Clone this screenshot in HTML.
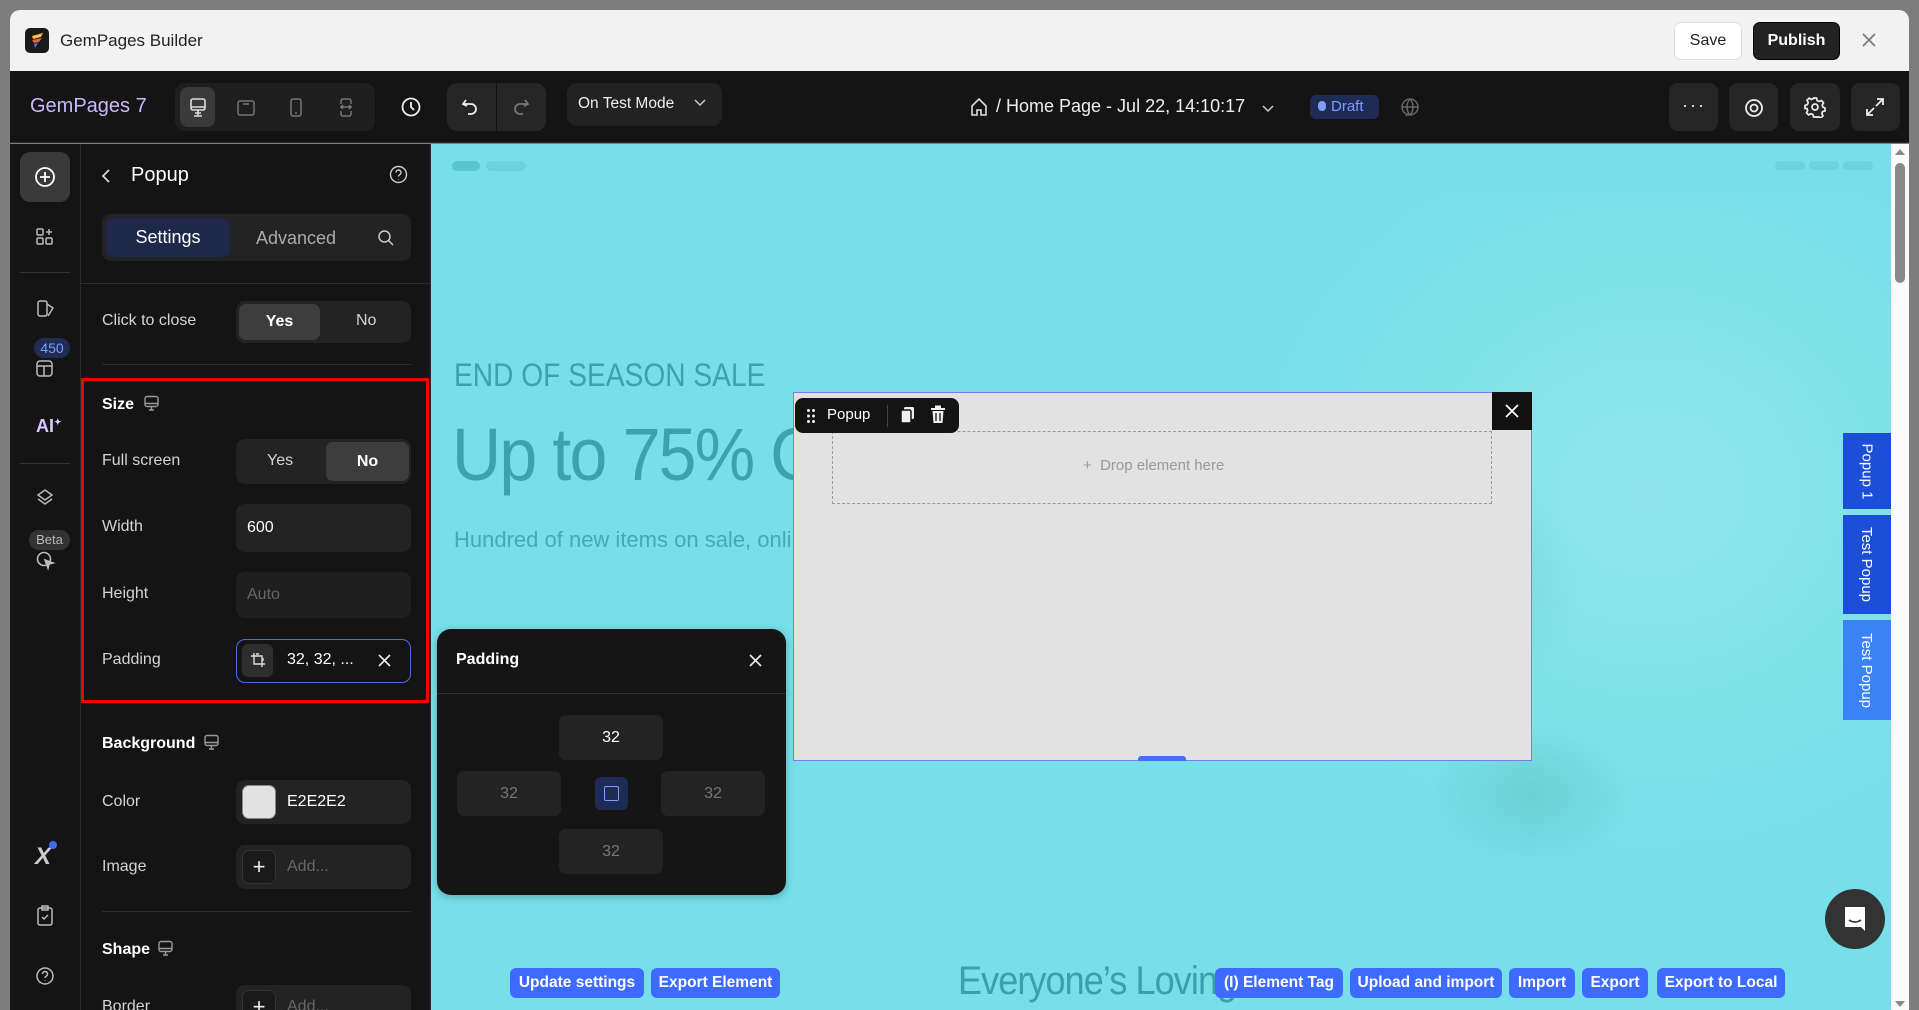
<!DOCTYPE html>
<html style="overflow:hidden;height:1010px"><head><meta charset="utf-8"><style>
*{box-sizing:border-box;margin:0;padding:0}
body{width:1919px;height:1010px;overflow:hidden;background:#7d7d7d;font-family:"Liberation Sans",sans-serif;position:relative}
.a{position:absolute}
.t{color:#d4d4d4;font-size:16px}
.ib{position:absolute;background:#262626;border-radius:8px}
svg{display:block}
.btn{position:absolute;background:#3d6bff;color:#fff;font-weight:bold;font-size:15.5px;border-radius:6px;height:30px;line-height:30px;text-align:center;top:968px}
.cell{position:absolute;background:#232323;border-radius:7px;color:#777;font-size:16px;text-align:center;line-height:45px;height:45px;width:104px}
.tab{position:absolute;left:1843px;width:48px;color:#fff;font-size:15px;display:flex;align-items:center;justify-content:center}
.tab span{transform:rotate(90deg);white-space:nowrap}
</style></head><body>
<div class="a" style="left:10px;top:10px;width:1899px;height:61px;background:#f2f2f2;border-radius:10px 10px 0 0"></div>
<div class="a" style="left:25px;top:28px;width:24px;height:25px;background:#1a1a1a;border-radius:5px"></div>
<svg class="a" style="left:28px;top:31px" width="18" height="19"><path d="M4 5 L15 2 L13 6 L5 8Z" fill="#f6c445"/><path d="M4 9 L14 7 L11 11 L6 12Z" fill="#ef5a3c"/><path d="M6 13 L10 12 L7 17Z" fill="#4b7bf5"/></svg>
<div class="a" style="left:60px;top:31px;font-size:17px;color:#222">GemPages Builder</div>
<div class="a" style="left:1674px;top:22px;width:68px;height:38px;background:#fff;border:1px solid #ddd;border-radius:7px;font-size:16px;line-height:36px;text-align:center;color:#222">Save</div>
<div class="a" style="left:1753px;top:22px;width:87px;height:38px;background:#222;border:1px solid #000;border-radius:7px;font-size:16px;font-weight:bold;line-height:36px;text-align:center;color:#fff">Publish</div>
<svg class="a" style="left:1862px;top:33px" width="14" height="14"><path d="M1 1L13 13M13 1L1 13" stroke="#777" stroke-width="1.6"/></svg>
<div class="a" style="left:10px;top:71px;width:1899px;height:72px;background:#141414;border-bottom:1px solid #2c2c2c"></div>
<div class="a" style="left:30px;top:95px;font-size:20px;color:#c9b8ff">GemPages 7</div>
<div class="ib" style="left:175px;top:83px;width:200px;height:48px;background:#1f1f1f;border-radius:10px"></div>
<div class="ib" style="left:180px;top:87px;width:35px;height:40px;background:#3a3a3a"></div>
<svg class="a" style="left:187px;top:97px" width="22" height="22" fill="none" stroke="#ddd" stroke-width="1.6"><rect x="4" y="2" width="14" height="11" rx="2"/><path d="M4 10H18M8 16H14M11 13V19M7 19H15"/></svg>
<svg class="a" style="left:236px;top:98px" width="20" height="20" fill="none" stroke="#777" stroke-width="1.5"><rect x="2" y="3" width="16" height="14" rx="2"/><path d="M7 6H13"/></svg>
<svg class="a" style="left:286px;top:97px" width="20" height="22" fill="none" stroke="#777" stroke-width="1.5"><rect x="5" y="2" width="10" height="17" rx="2"/><path d="M9 16H11"/></svg>
<svg class="a" style="left:336px;top:97px" width="20" height="22" fill="none" stroke="#777" stroke-width="1.5"><path d="M5 7V4a2 2 0 0 1 2-2h6a2 2 0 0 1 2 2v3M5 14v3a2 2 0 0 0 2 2h6a2 2 0 0 0 2-2v-3M4 10h12M7 8l-2 2 2 2M13 8l2 2-2 2"/></svg>
<svg class="a" style="left:400px;top:96px" width="22" height="22" fill="none" stroke="#eee" stroke-width="1.8"><circle cx="11" cy="11" r="8.5"/><path d="M11 6V11L14 14"/></svg>
<div class="ib" style="left:447px;top:83px;width:99px;height:48px;background:#262626;border-radius:10px"></div>
<div class="a" style="left:496px;top:83px;width:1px;height:48px;background:#111"></div>
<svg class="a" style="left:459px;top:96px" width="22" height="22" fill="none" stroke="#eee" stroke-width="1.8"><path d="M7 4L4 8L8 10M4 8H12a5 5 0 0 1 0 10H9"/></svg>
<svg class="a" style="left:510px;top:96px" width="22" height="22" fill="none" stroke="#777" stroke-width="1.8"><path d="M15 4L18 8L14 10M18 8H10a5 5 0 0 0 0 10H13"/></svg>
<div class="ib" style="left:567px;top:83px;width:155px;height:43px;background:#222;border-radius:10px"></div>
<div class="a" style="left:578px;top:95px;font-size:15.5px;color:#eee">On Test Mode</div>
<svg class="a" style="left:693px;top:98px" width="14" height="10" fill="none" stroke="#ccc" stroke-width="1.5"><path d="M2 2L7 7L12 2"/></svg>
<svg class="a" style="left:970px;top:97px" width="18" height="20" fill="none" stroke="#ddd" stroke-width="1.6"><path d="M2 9L9 2L16 9V18H11V13H7V18H2Z"/></svg>
<div class="a" style="left:996px;top:96px;font-size:18px;color:#eee">/ Home Page - Jul 22, 14:10:17</div>
<svg class="a" style="left:1261px;top:104px" width="14" height="10" fill="none" stroke="#ccc" stroke-width="1.5"><path d="M2 2L7 7L12 2"/></svg>
<div class="a" style="left:1310px;top:95px;width:69px;height:24px;background:#1e2b55;border-radius:6px;font-size:15px;color:#7f9cff;line-height:24px;padding-left:8px"><span style="display:inline-block;width:8px;height:10px;border-radius:4px;background:#7f9cff;margin-right:5px"></span>Draft</div>
<svg class="a" style="left:1399px;top:97px" width="22" height="22" fill="none" stroke="#666" stroke-width="1.5"><circle cx="11" cy="10" r="8"/><path d="M3 10H19M11 2C7 6 7 14 11 18M11 2C15 6 15 14 11 18M7 19L10 16"/></svg>
<div class="ib" style="left:1669px;top:83px;width:49px;height:48px;background:#262626;border-radius:9px"></div>
<div class="a" style="left:1682px;top:95px;color:#eee;font-size:18px;letter-spacing:2px">···</div>
<div class="ib" style="left:1729px;top:83px;width:49px;height:48px;background:#262626;border-radius:9px"></div>
<svg class="a" style="left:1743px;top:97px" width="22" height="22" fill="none" stroke="#eee" stroke-width="1.8"><circle cx="11" cy="11" r="8"/><circle cx="11" cy="11" r="3.5"/></svg>
<div class="ib" style="left:1790px;top:83px;width:50px;height:48px;background:#262626;border-radius:9px"></div>
<svg class="a" style="left:1804px;top:96px" width="22" height="22" fill="none" stroke="#eee" stroke-width="1.7"><circle cx="11" cy="11" r="3"/><path d="M9.5 2h3l.6 2.5 2 1 2.4-1 2 2.3-1.3 2.2.6 2 2.2 1v3l-2.4.6-.8 2 1.2 2.3-2.1 2.1-2.3-1.2-2 .8L12.5 21h-3l-.6-2.5-2-.8-2.3 1.2-2.1-2.1 1.2-2.3-.8-2L1 12.5v-3l2.4-.9.8-2L3 4.3l2.1-2.1 2.3 1.2 2-.8Z"/></svg>
<div class="ib" style="left:1851px;top:83px;width:49px;height:48px;background:#262626;border-radius:9px"></div>
<svg class="a" style="left:1865px;top:97px" width="20" height="20" fill="none" stroke="#eee" stroke-width="1.8"><path d="M12 2H18V8M18 2L11 9M8 18H2V12M2 18L9 11"/></svg>
<div class="a" style="left:10px;top:144px;width:71px;height:866px;background:#141414;border-right:1px solid #2a2a2a"></div>
<div class="ib" style="left:20px;top:152px;width:50px;height:50px;background:#3a3a3a;border-radius:10px"></div>
<svg class="a" style="left:34px;top:166px" width="22" height="22" fill="none" stroke="#fff" stroke-width="1.8"><circle cx="11" cy="11" r="9"/><path d="M11 6V16M6 11H16"/></svg>
<svg class="a" style="left:36px;top:228px" width="18" height="18" fill="none" stroke="#bbb" stroke-width="1.5"><rect x="1" y="1" width="6" height="6" rx="1"/><rect x="1" y="10" width="6" height="6" rx="1"/><rect x="10" y="10" width="6" height="6" rx="1"/><path d="M13 1V7M10 4H16"/></svg>
<div class="a" style="left:20px;top:272px;width:50px;height:1px;background:#333"></div>
<svg class="a" style="left:36px;top:299px" width="20" height="20" fill="none" stroke="#bbb" stroke-width="1.5"><rect x="2" y="2" width="9" height="15" rx="2"/><path d="M11 5L17 9L12 17"/></svg>
<div class="a" style="left:34px;top:338px;width:36px;height:20px;border-radius:10px;background:#1f2d55;color:#7f9cff;font-size:14px;text-align:center;line-height:20px">450</div>
<svg class="a" style="left:36px;top:360px" width="18" height="18" fill="none" stroke="#bbb" stroke-width="1.5"><rect x="1" y="1" width="15" height="15" rx="3"/><path d="M1 6H16M8 6V16"/></svg>
<div class="a" style="left:36px;top:416px;color:#d9c8ff;font-size:18px;font-weight:bold">AI<sup style="font-size:9px">✦</sup></div>
<div class="a" style="left:20px;top:463px;width:50px;height:1px;background:#333"></div>
<svg class="a" style="left:35px;top:488px" width="20" height="20" fill="none" stroke="#bbb" stroke-width="1.5"><path d="M10 2L17 7L10 12L3 7Z M3 11L10 16L17 11"/></svg>
<div class="a" style="left:29px;top:530px;width:41px;height:20px;border-radius:10px;background:#333;color:#bbb;font-size:13px;text-align:center;line-height:20px">Beta</div>
<svg class="a" style="left:36px;top:551px" width="20" height="20" fill="none" stroke="#bbb" stroke-width="1.6"><circle cx="8" cy="8" r="6.5"/><path d="M9 9L17 12L13 13L12 17Z" fill="#bbb"/></svg>
<div class="a" style="left:35px;top:843px;color:#ccc;font-size:24px;font-weight:bold;font-style:italic">X</div>
<div class="a" style="left:49px;top:841px;width:8px;height:8px;border-radius:50%;background:#3b6cff"></div>
<svg class="a" style="left:36px;top:905px" width="18" height="22" fill="none" stroke="#bbb" stroke-width="1.5"><rect x="2" y="3" width="14" height="17" rx="2"/><path d="M6 1H12V5H6ZM6 12L8 14L12 10"/></svg>
<svg class="a" style="left:35px;top:966px" width="20" height="20" fill="none" stroke="#bbb" stroke-width="1.5"><circle cx="10" cy="10" r="8"/><path d="M7.5 8a2.5 2.5 0 1 1 3.5 2.3c-.7.4-1 .8-1 1.7M10 14.5V15"/></svg>
<div class="a" style="left:81px;top:144px;width:350px;height:866px;background:#141414;border-right:1px solid #2a2a2a;overflow:hidden">
<svg class="a" style="left:19px;top:24px" width="12" height="16" fill="none" stroke="#ddd" stroke-width="1.7"><path d="M9 2L3 8L9 14"/></svg>
<div class="a" style="left:50px;top:20px;color:#fff;font-size:20px">Popup</div>
<svg class="a" style="left:308px;top:21px" width="19" height="19" fill="none" stroke="#ccc" stroke-width="1.4"><circle cx="9.5" cy="9.5" r="8"/><path d="M7 7.5a2.5 2.5 0 1 1 3.5 2.3c-.7.4-1 .8-1 1.7M9.5 14V14.5"/></svg>
<div class="ib" style="left:21px;top:70px;width:309px;height:47px;background:#232323;border-radius:9px"></div>
<div class="ib" style="left:25px;top:74px;width:124px;height:39px;background:#1e2849;border-radius:7px;color:#fff;font-size:18px;text-align:center;line-height:39px">Settings</div>
<div class="a" style="left:175px;top:84px;color:#aaa;font-size:18px">Advanced</div>
<svg class="a" style="left:296px;top:85px" width="18" height="18" fill="none" stroke="#ccc" stroke-width="1.5"><circle cx="7.5" cy="7.5" r="5.5"/><path d="M11.5 11.5L16 16"/></svg>
<div class="a" style="left:0;top:139px;width:349px;height:1px;background:#2c2c2c"></div>
<div class="a t" style="left:21px;top:168px">Click to close</div>
<div class="ib" style="left:155px;top:157px;width:175px;height:42px;background:#232323;border-radius:9px"></div>
<div class="ib" style="left:158px;top:160px;width:81px;height:36px;background:#3d3d3d;border-radius:7px;color:#fff;font-weight:bold;font-size:16px;text-align:center;line-height:36px">Yes</div>
<div class="a t" style="left:275px;top:168px">No</div>
<div class="a" style="left:21px;top:220px;width:309px;height:1px;background:#2c2c2c"></div>
<div class="a" style="left:0;top:234px;width:348px;height:325px;border:3px solid #f20000"></div>
<div class="a" style="left:21px;top:252px;color:#fff;font-weight:bold;font-size:16px">Size</div>
<svg class="a" style="left:62px;top:251px" width="17" height="17" fill="none" stroke="#999" stroke-width="1.4"><rect x="2" y="1.5" width="13" height="10" rx="2"/><path d="M2 8.5H15M6 15H11M8.5 11.5V15"/></svg>
<div class="a t" style="left:21px;top:308px">Full screen</div>
<div class="ib" style="left:155px;top:295px;width:175px;height:45px;background:#232323;border-radius:9px"></div>
<div class="a t" style="left:186px;top:308px">Yes</div>
<div class="ib" style="left:245px;top:298px;width:83px;height:39px;background:#3d3d3d;border-radius:7px;color:#fff;font-weight:bold;font-size:16px;text-align:center;line-height:39px">No</div>
<div class="a t" style="left:21px;top:374px">Width</div>
<div class="ib" style="left:155px;top:360px;width:175px;height:48px;background:#232323;border-radius:9px;color:#fff;font-size:16px;line-height:48px;padding-left:11px">600</div>
<div class="a t" style="left:21px;top:441px">Height</div>
<div class="ib" style="left:155px;top:428px;width:175px;height:46px;background:#1f1f1f;border-radius:9px;color:#666;font-size:16px;line-height:46px;padding-left:11px">Auto</div>
<div class="a t" style="left:21px;top:507px">Padding</div>
<div class="ib" style="left:155px;top:495px;width:175px;height:44px;background:#141414;border:1.5px solid #4a6cf0;border-radius:9px"></div>
<div class="ib" style="left:161px;top:500px;width:31px;height:33px;background:#2e2e2e;border-radius:6px"></div>
<svg class="a" style="left:169px;top:508px" width="16" height="16" fill="none" stroke="#ddd" stroke-width="1.4"><path d="M4 1V12H15M1 4H12V15M6 2H9M13 6V9"/></svg>
<div class="a" style="left:206px;top:507px;color:#fff;font-size:16px">32, 32, ...</div>
<svg class="a" style="left:297px;top:510px" width="13" height="13" fill="none" stroke="#eee" stroke-width="1.6"><path d="M1 1L12 12M12 1L1 12"/></svg>
<div class="a" style="left:21px;top:591px;color:#fff;font-weight:bold;font-size:16px">Background</div>
<svg class="a" style="left:122px;top:590px" width="17" height="17" fill="none" stroke="#999" stroke-width="1.4"><rect x="2" y="1.5" width="13" height="10" rx="2"/><path d="M2 8.5H15M6 15H11M8.5 11.5V15"/></svg>
<div class="a t" style="left:21px;top:649px">Color</div>
<div class="ib" style="left:155px;top:636px;width:175px;height:44px;background:#232323;border-radius:9px"></div>
<div class="a" style="left:161px;top:641px;width:34px;height:34px;background:#e2e2e2;border-radius:7px;border:1px solid #888"></div>
<div class="a" style="left:206px;top:649px;color:#fff;font-size:16px">E2E2E2</div>
<div class="a t" style="left:21px;top:714px">Image</div>
<div class="ib" style="left:155px;top:701px;width:175px;height:44px;background:#232323;border-radius:9px"></div>
<div class="a" style="left:161px;top:706px;width:34px;height:34px;border:1px solid #333;border-radius:7px;background:#1a1a1a;color:#eee;font-size:22px;text-align:center;line-height:31px">+</div>
<div class="a" style="left:206px;top:714px;color:#666;font-size:16px">Add...</div>
<div class="a" style="left:21px;top:767px;width:309px;height:1px;background:#2c2c2c"></div>
<div class="a" style="left:21px;top:797px;color:#fff;font-weight:bold;font-size:16px">Shape</div>
<svg class="a" style="left:76px;top:796px" width="17" height="17" fill="none" stroke="#999" stroke-width="1.4"><rect x="2" y="1.5" width="13" height="10" rx="2"/><path d="M2 8.5H15M6 15H11M8.5 11.5V15"/></svg>
<div class="a t" style="left:21px;top:854px">Border</div>
<div class="ib" style="left:155px;top:841px;width:175px;height:44px;background:#232323;border-radius:9px"></div>
<div class="a" style="left:161px;top:846px;width:34px;height:34px;border:1px solid #333;border-radius:7px;background:#1a1a1a;color:#eee;font-size:22px;text-align:center;line-height:31px">+</div>
<div class="a" style="left:206px;top:854px;color:#666;font-size:16px">Add...</div>
</div>
<div class="a" style="left:431px;top:144px;width:1460px;height:866px;background:#76dfe9;overflow:hidden">
  <div class="a" style="left:0;top:48px;width:1460px;height:661px;background:radial-gradient(ellipse 420px 380px at 1220px 300px,#8fe6ec 0%,#80e2e9 55%,#76dfe9 100%)"></div>
  <div class="a" style="left:850px;top:300px;width:300px;height:280px;border-radius:40%;background:radial-gradient(#68cdcc,transparent 70%);opacity:.7"></div>
  <div class="a" style="left:1000px;top:580px;width:200px;height:140px;border-radius:50%;background:radial-gradient(#5cc0c0,transparent 70%);opacity:.5"></div>
  <div class="a" style="left:21px;top:17px;width:28px;height:10px;border-radius:5px;background:#5ac4cf"></div>
  <div class="a" style="left:55px;top:17px;width:40px;height:10px;border-radius:5px;background:#6bd3dd"></div>
  <div class="a" style="left:1344px;top:17px;width:30px;height:9px;border-radius:5px;background:#6bd3dd"></div>
  <div class="a" style="left:1378px;top:17px;width:30px;height:9px;border-radius:5px;background:#6bd3dd"></div>
  <div class="a" style="left:1412px;top:17px;width:30px;height:9px;border-radius:5px;background:#6bd3dd"></div>
  <div class="a" style="left:23px;top:213px;font-size:32px;color:#3aa3ae;white-space:nowrap;transform:scaleX(0.88);transform-origin:left">END OF SEASON SALE</div>
  <div class="a" style="left:21px;top:268px;font-size:74px;color:#3aa3ae;letter-spacing:-2px;white-space:nowrap;transform:scaleX(0.92);transform-origin:left">Up to 75% O</div>
  <div class="a" style="left:23px;top:383px;font-size:22px;color:#46aab5;white-space:nowrap">Hundred of new items on sale, online</div>
  <div class="a" style="left:527px;top:815px;font-size:40px;color:#3aa0ab;white-space:nowrap;letter-spacing:-1px;transform:scaleX(0.9);transform-origin:left">Everyone’s Loving</div>
</div>
<div class="a" style="left:793px;top:392px;width:739px;height:369px;background:#e2e2e2;border:1.5px solid #7a7af0"></div>
<div class="a" style="left:832px;top:431px;width:660px;height:73px;border:1px dashed #9a9a9a"></div>
<div class="a" style="left:1083px;top:457px;font-size:15px;color:#999">+ &nbsp;Drop element here</div>
<div class="a" style="left:1492px;top:392px;width:40px;height:38px;background:#111"></div>
<svg class="a" style="left:1505px;top:404px" width="14" height="14" fill="none" stroke="#fff" stroke-width="1.8"><path d="M1 1L13 13M13 1L1 13"/></svg>
<div class="a" style="left:795px;top:398px;width:164px;height:35px;background:#141414;border-radius:8px"></div>
<svg class="a" style="left:806px;top:408px" width="10" height="16" fill="#eee"><circle cx="2.5" cy="2.5" r="1.5"/><circle cx="7.5" cy="2.5" r="1.5"/><circle cx="2.5" cy="8" r="1.5"/><circle cx="7.5" cy="8" r="1.5"/><circle cx="2.5" cy="13.5" r="1.5"/><circle cx="7.5" cy="13.5" r="1.5"/></svg>
<div class="a" style="left:827px;top:406px;color:#fff;font-size:15px">Popup</div>
<div class="a" style="left:887px;top:405px;width:1px;height:22px;background:#444"></div>
<svg class="a" style="left:900px;top:406px" width="16" height="18" fill="#eee"><rect x="4" y="1" width="10" height="12" rx="1.5"/><rect x="1" y="4" width="10" height="13" rx="1.5" stroke="#141414" stroke-width="1.5"/></svg>
<svg class="a" style="left:930px;top:405px" width="16" height="19" fill="#eee"><rect x="1" y="3" width="14" height="2"/><rect x="5" y="0.5" width="6" height="3"/><path d="M2.5 6H13.5L12.5 18H3.5Z"/><path d="M6 8V16M10 8V16" stroke="#141414" stroke-width="1.3"/></svg>
<div class="a" style="left:1138px;top:756px;width:48px;height:5px;background:#4a6cf5;border-radius:3px 3px 0 0"></div>
<div class="a" style="left:437px;top:629px;width:349px;height:266px;background:#151515;border-radius:14px;box-shadow:0 2px 8px rgba(0,0,0,.25)"></div>
<div class="a" style="left:456px;top:651px;color:#fff;font-weight:bold;font-size:16px">Padding</div>
<svg class="a" style="left:749px;top:654px" width="13" height="13" fill="none" stroke="#eee" stroke-width="1.6"><path d="M1 1L12 12M12 1L1 12"/></svg>
<div class="a" style="left:437px;top:693px;width:349px;height:1px;background:#2e2e2e"></div>
<div class="cell" style="left:559px;top:715px;color:#fff">32</div>
<div class="cell" style="left:457px;top:771px">32</div>
<div class="cell" style="left:661px;top:771px">32</div>
<div class="cell" style="left:559px;top:829px">32</div>
<div class="a" style="left:595px;top:777px;width:33px;height:33px;background:#1e2b55;border-radius:6px"></div>
<div class="a" style="left:604px;top:786px;width:15px;height:15px;border:1.5px solid #7f9cff;border-radius:2px"></div>
<div class="tab" style="top:433px;height:76px;background:#1d4ed8"><span>Popup 1</span></div>
<div class="tab" style="top:515px;height:99px;background:#1d4ed8"><span>Test Popup</span></div>
<div class="tab" style="top:620px;height:100px;background:#3b82f6"><span>Test Popup</span></div>
<div class="a" style="left:1825px;top:889px;width:60px;height:60px;border-radius:50%;background:#333"></div>
<svg class="a" style="left:1842px;top:906px" width="26" height="26"><path d="M3 1H23V25L19 21H3Z" fill="#fff"/><path d="M7 14Q13 18 19 14" stroke="#333" stroke-width="1.6" fill="none"/></svg>
<div class="a" style="left:1891px;top:144px;width:18px;height:866px;background:#fafafa"></div>
<div class="a" style="left:1895px;top:163px;width:10px;height:120px;background:#888;border-radius:5px"></div>
<svg class="a" style="left:1894px;top:148px" width="12" height="8"><path d="M1 7L6 1L11 7Z" fill="#888"/></svg>
<svg class="a" style="left:1894px;top:1000px" width="12" height="8"><path d="M1 1L6 7L11 1Z" fill="#888"/></svg>
<div class="btn" style="left:510px;width:134px">Update settings</div>
<div class="btn" style="left:651px;width:129px">Export Element</div>
<div class="btn" style="left:1215px;width:128px">(I) Element Tag</div>
<div class="btn" style="left:1350px;width:152px">Upload and import</div>
<div class="btn" style="left:1509px;width:66px">Import</div>
<div class="btn" style="left:1582px;width:66px">Export</div>
<div class="btn" style="left:1657px;width:128px">Export to Local</div>
</body></html>
